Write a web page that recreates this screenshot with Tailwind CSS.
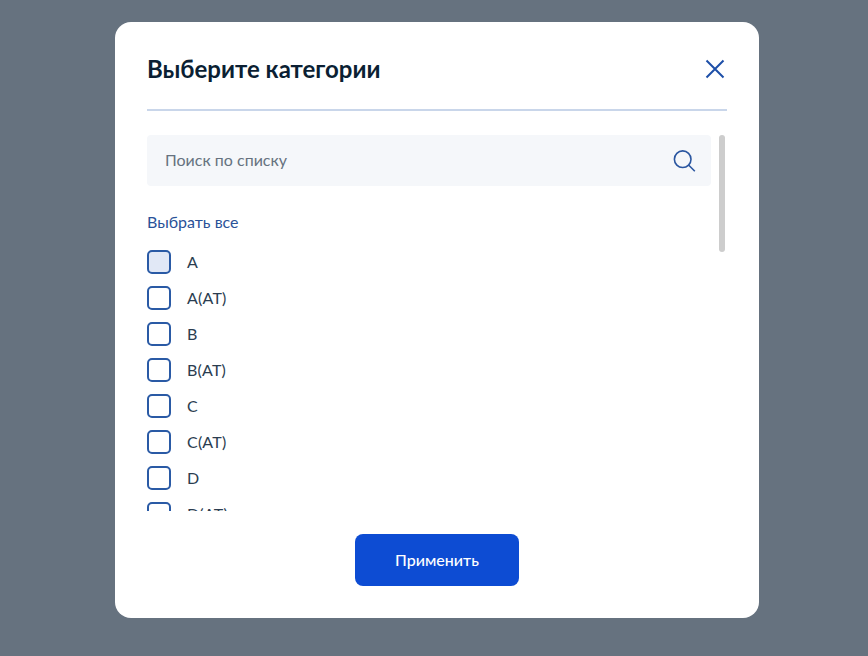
<!DOCTYPE html>
<html lang="ru">

<head>
	<meta charset="UTF-8">
	<meta name="viewport" content="width=device-width, initial-scale=1.0">
	<title>Выберите категории</title>
	<script src="https://cdn.jsdelivr.net/npm/@tailwindcss/browser@4"></script>
</head>

<body class="bg-[#66727f] h-[656px] overflow-hidden font-['Lato','Noto_Sans',sans-serif]">
	<div class="flex justify-center pt-[22px] pl-[6px]">
		<div class="bg-white rounded-[16px] w-[644px] h-[596px] pt-[32px] px-[32px] flex flex-col">

			<!-- header -->
			<div class="flex justify-between items-center h-[30px]">
				<h1 class="text-[24px] leading-[30px] font-bold text-[#0b1f33]">Выберите категории</h1>
				<button class="w-[24px] h-[24px]">
					<svg width="24" height="24" viewBox="0 0 24 24" fill="none" stroke="#1d4fa8" stroke-width="2">
						<path d="M3.5 3.5l17 17M20.5 3.5l-17 17" />
					</svg>
				</button>
			</div>
			<div class="h-[2px] bg-[#c9d6ea] mt-[25px] mb-[24px]"></div>

			<!-- list with scrollbar -->
			<div class="relative h-[376px] overflow-hidden">
				<div class="w-[564px] h-[51px] bg-[#f5f7fa] rounded-[4px] flex items-center justify-between pl-[18px] pr-[14px]">
					<span class="text-[16px] text-[#66727f] mb-[1px]">Поиск по списку</span>
					<svg width="24" height="24" viewBox="0 0 24 24" fill="none" stroke="#2a56a0" stroke-width="1.6">
						<circle cx="9.7" cy="10.2" r="8.3" />
						<path d="M15.8 16.2l6 6" />
					</svg>
				</div>
				<a class="block mt-[26px] text-[16px] leading-[20px] text-[#2a5298]">Выбрать все</a>
				<ul class="mt-[18px] flex flex-col gap-[12px] text-[16px] leading-[24px] tracking-[0.2px] text-[#2b3d50]">
					<li class="flex items-center gap-[16px]"><span class="w-[24px] h-[24px] rounded-[5px] border-2 border-[#2a5aa5] bg-[#e1e8f6]"></span>A</li>
					<li class="flex items-center gap-[16px]"><span class="w-[24px] h-[24px] rounded-[5px] border-2 border-[#2a5aa5]"></span>A(AT)</li>
					<li class="flex items-center gap-[16px]"><span class="w-[24px] h-[24px] rounded-[5px] border-2 border-[#2a5aa5]"></span>B</li>
					<li class="flex items-center gap-[16px]"><span class="w-[24px] h-[24px] rounded-[5px] border-2 border-[#2a5aa5]"></span>B(AT)</li>
					<li class="flex items-center gap-[16px]"><span class="w-[24px] h-[24px] rounded-[5px] border-2 border-[#2a5aa5]"></span>C</li>
					<li class="flex items-center gap-[16px]"><span class="w-[24px] h-[24px] rounded-[5px] border-2 border-[#2a5aa5]"></span>C(AT)</li>
					<li class="flex items-center gap-[16px]"><span class="w-[24px] h-[24px] rounded-[5px] border-2 border-[#2a5aa5]"></span>D</li>
					<li class="flex items-center gap-[16px]"><span class="w-[24px] h-[24px] rounded-[5px] border-2 border-[#2a5aa5]"></span>D(AT)</li>
				</ul>
				<div class="absolute top-0 right-[2px] w-[6px] h-[117px] rounded-[3px] bg-[#cdcdcd]"></div>
			</div>

			<!-- footer -->
			<div class="flex justify-center mt-[23px]">
				<button class="w-[164px] h-[52px] rounded-[8px] bg-[#0d4cd3] text-white text-[16px] font-medium">Применить</button>
			</div>
		</div>
	</div>
</body>

</html>
